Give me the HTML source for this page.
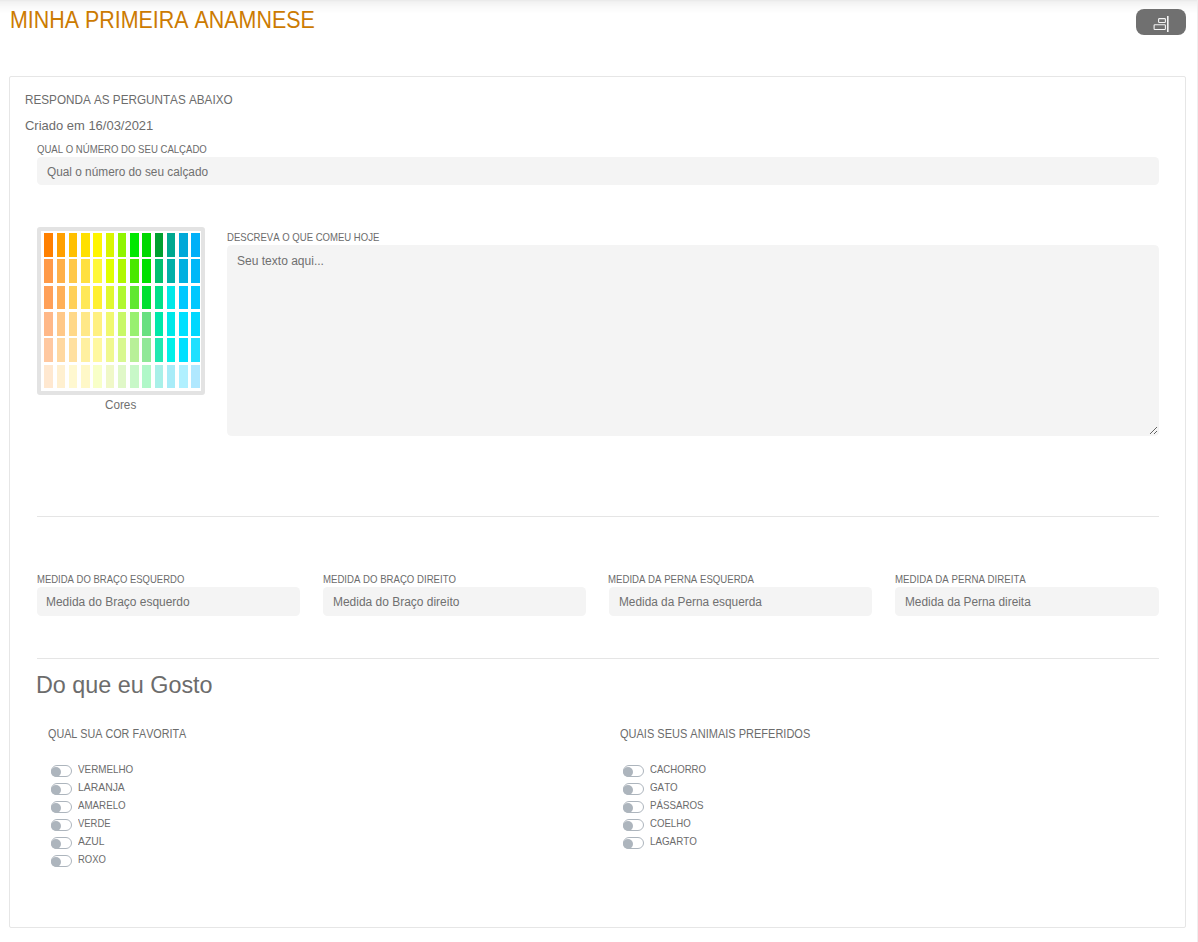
<!DOCTYPE html>
<html><head><meta charset="utf-8">
<style>
*{box-sizing:border-box;margin:0;padding:0}
html,body{width:1198px;height:942px;overflow:hidden;background:#fff}
body{font-family:"Liberation Sans",sans-serif;position:relative;color:#5a5a5a}
.sh{position:absolute;left:0;width:1198px;height:1px}
.redge{position:absolute;left:1197px;top:0;width:1px;height:942px;background:#efefef}
.t{position:absolute;white-space:nowrap;line-height:1;transform-origin:0 0;font-kerning:none}
.title{color:#cc7b02}
.btn{position:absolute;left:1136px;top:9px;width:50px;height:26px;background:#707070;border-radius:8px}
.card{position:absolute;left:9px;top:76px;width:1177px;height:852px;border:1px solid #e6e6e6;border-radius:2px}
.inp{position:absolute;background:#f4f4f4;border-radius:4.5px}
.ta{position:absolute;background:#f4f4f4;border-radius:4.5px;border:1px solid #f4f4f4;outline:0;resize:vertical;display:block}
.hr{position:absolute;height:1px;background:#e5e5e5}
.lbl{color:#6c6c6c}
.ph{color:#707070}
.pal{position:absolute;left:37px;top:227px;width:168px;height:168px;border:4px solid #e3e3e3;border-radius:3px;background:#fff}
.sw{position:absolute;width:8.5px;height:23.7px}
.tg{position:absolute;width:21px;height:12px;border:1px solid #adb5bd;border-radius:6px;background:#fff}
.tg::after{content:"";position:absolute;left:-1px;top:1px;width:10px;height:10px;border-radius:50%;background:#adb5bd}
.opt{color:#6c6c6c}
.q{color:#6c6c6c}
.hd{color:#6c6c6c}
.h3{color:#6c6c6c}
</style></head><body>
<div class="sh" style="top:0px;background:#ebebeb"></div><div class="sh" style="top:1px;background:#f0f0f0"></div><div class="sh" style="top:2px;background:#f3f3f3"></div><div class="sh" style="top:3px;background:#f4f4f4"></div><div class="sh" style="top:4px;background:#f6f6f6"></div><div class="sh" style="top:5px;background:#f7f7f7"></div><div class="sh" style="top:6px;background:#f9f9f9"></div><div class="sh" style="top:7px;background:#fafafa"></div><div class="sh" style="top:8px;background:#fbfbfb"></div><div class="sh" style="top:9px;background:#fcfcfc"></div><div class="sh" style="top:10px;background:#fcfcfc"></div><div class="sh" style="top:11px;background:#fdfdfd"></div><div class="sh" style="top:12px;background:#fefefe"></div><div class="redge"></div>
<div class="btn"><svg width="50" height="26" viewBox="0 0 50 26" style="position:absolute;left:0;top:0"><g fill="none" stroke="#f4f4f4"><line x1="31.8" y1="6.9" x2="31.8" y2="22.9" stroke-width="1.6"/><rect x="22.6" y="9.6" width="6.8" height="3.9" rx="0.8" stroke-width="1.1"/><rect x="18.1" y="15.8" width="11.3" height="4.7" rx="0.8" stroke-width="1.1"/></g></svg></div>
<div class="card"></div>
<div class="inp" style="left:37px;top:157px;width:1122px;height:28px"></div>
<div class="pal"></div>
<div style="position:absolute;left:0;top:0;width:1198px;height:942px"><div class="sw" style="left:44.40px;top:233.00px;background:#FF8000"></div><div class="sw" style="left:56.65px;top:233.00px;background:#FFA000"></div><div class="sw" style="left:68.90px;top:233.00px;background:#FFC000"></div><div class="sw" style="left:81.15px;top:233.00px;background:#FFE000"></div><div class="sw" style="left:93.40px;top:233.00px;background:#FFF500"></div><div class="sw" style="left:105.65px;top:233.00px;background:#D8F500"></div><div class="sw" style="left:117.90px;top:233.00px;background:#90F500"></div><div class="sw" style="left:130.15px;top:233.00px;background:#00E800"></div><div class="sw" style="left:142.40px;top:233.00px;background:#00D800"></div><div class="sw" style="left:154.65px;top:233.00px;background:#00A030"></div><div class="sw" style="left:166.90px;top:233.00px;background:#00A890"></div><div class="sw" style="left:179.15px;top:233.00px;background:#00A8D8"></div><div class="sw" style="left:191.40px;top:233.00px;background:#00B0F8"></div><div class="sw" style="left:44.40px;top:259.30px;background:#FF9A48"></div><div class="sw" style="left:56.65px;top:259.30px;background:#FFB048"></div><div class="sw" style="left:68.90px;top:259.30px;background:#FFC848"></div><div class="sw" style="left:81.15px;top:259.30px;background:#FFE040"></div><div class="sw" style="left:93.40px;top:259.30px;background:#FFF838"></div><div class="sw" style="left:105.65px;top:259.30px;background:#E0FF00"></div><div class="sw" style="left:117.90px;top:259.30px;background:#B0F800"></div><div class="sw" style="left:130.15px;top:259.30px;background:#48E800"></div><div class="sw" style="left:142.40px;top:259.30px;background:#00E000"></div><div class="sw" style="left:154.65px;top:259.30px;background:#00C070"></div><div class="sw" style="left:166.90px;top:259.30px;background:#00B0A8"></div><div class="sw" style="left:179.15px;top:259.30px;background:#00B0E0"></div><div class="sw" style="left:191.40px;top:259.30px;background:#00B8F8"></div><div class="sw" style="left:44.40px;top:285.60px;background:#FFA058"></div><div class="sw" style="left:56.65px;top:285.60px;background:#FFB058"></div><div class="sw" style="left:68.90px;top:285.60px;background:#FFD058"></div><div class="sw" style="left:81.15px;top:285.60px;background:#FFE858"></div><div class="sw" style="left:93.40px;top:285.60px;background:#FFF030"></div><div class="sw" style="left:105.65px;top:285.60px;background:#E0F830"></div><div class="sw" style="left:117.90px;top:285.60px;background:#B0F830"></div><div class="sw" style="left:130.15px;top:285.60px;background:#60E830"></div><div class="sw" style="left:142.40px;top:285.60px;background:#00E030"></div><div class="sw" style="left:154.65px;top:285.60px;background:#00E088"></div><div class="sw" style="left:166.90px;top:285.60px;background:#00E8E8"></div><div class="sw" style="left:179.15px;top:285.60px;background:#00C8FF"></div><div class="sw" style="left:191.40px;top:285.60px;background:#00C8FF"></div><div class="sw" style="left:44.40px;top:311.90px;background:#FFB888"></div><div class="sw" style="left:56.65px;top:311.90px;background:#FFC888"></div><div class="sw" style="left:68.90px;top:311.90px;background:#FFD888"></div><div class="sw" style="left:81.15px;top:311.90px;background:#FFE888"></div><div class="sw" style="left:93.40px;top:311.90px;background:#FFF080"></div><div class="sw" style="left:105.65px;top:311.90px;background:#F0F870"></div><div class="sw" style="left:117.90px;top:311.90px;background:#C8F868"></div><div class="sw" style="left:130.15px;top:311.90px;background:#98F070"></div><div class="sw" style="left:142.40px;top:311.90px;background:#68E080"></div><div class="sw" style="left:154.65px;top:311.90px;background:#00E8A8"></div><div class="sw" style="left:166.90px;top:311.90px;background:#00E8E8"></div><div class="sw" style="left:179.15px;top:311.90px;background:#00E0FF"></div><div class="sw" style="left:191.40px;top:311.90px;background:#00D8FF"></div><div class="sw" style="left:44.40px;top:338.20px;background:#FFC8A0"></div><div class="sw" style="left:56.65px;top:338.20px;background:#FFD8A0"></div><div class="sw" style="left:68.90px;top:338.20px;background:#FFE0A0"></div><div class="sw" style="left:81.15px;top:338.20px;background:#FFF0A0"></div><div class="sw" style="left:93.40px;top:338.20px;background:#FFF8A0"></div><div class="sw" style="left:105.65px;top:338.20px;background:#F0F890"></div><div class="sw" style="left:117.90px;top:338.20px;background:#D8F890"></div><div class="sw" style="left:130.15px;top:338.20px;background:#B8F098"></div><div class="sw" style="left:142.40px;top:338.20px;background:#90E898"></div><div class="sw" style="left:154.65px;top:338.20px;background:#20E8B0"></div><div class="sw" style="left:166.90px;top:338.20px;background:#00F0E8"></div><div class="sw" style="left:179.15px;top:338.20px;background:#00E0FF"></div><div class="sw" style="left:191.40px;top:338.20px;background:#20E0FF"></div><div class="sw" style="left:44.40px;top:364.50px;background:#FFE8D0"></div><div class="sw" style="left:56.65px;top:364.50px;background:#FFF0D0"></div><div class="sw" style="left:68.90px;top:364.50px;background:#FFF8D0"></div><div class="sw" style="left:81.15px;top:364.50px;background:#FFF8C8"></div><div class="sw" style="left:93.40px;top:364.50px;background:#F8FFC8"></div><div class="sw" style="left:105.65px;top:364.50px;background:#F0F8C8"></div><div class="sw" style="left:117.90px;top:364.50px;background:#E0F8C8"></div><div class="sw" style="left:130.15px;top:364.50px;background:#C8F8C8"></div><div class="sw" style="left:142.40px;top:364.50px;background:#B0F8C8"></div><div class="sw" style="left:154.65px;top:364.50px;background:#A8F0E8"></div><div class="sw" style="left:166.90px;top:364.50px;background:#A8ECF8"></div><div class="sw" style="left:179.15px;top:364.50px;background:#B0F0FF"></div><div class="sw" style="left:191.40px;top:364.50px;background:#B0E8FF"></div></div>
<textarea class="ta" style="left:227px;top:245px;width:932px;height:191px"></textarea>
<div class="hr" style="left:37px;top:516px;width:1122px"></div>
<div class="inp" style="left:37px;top:587px;width:263px;height:29px"></div>
<div class="inp" style="left:323px;top:587px;width:263px;height:29px"></div>
<div class="inp" style="left:609px;top:587px;width:263px;height:29px"></div>
<div class="inp" style="left:895px;top:587px;width:264px;height:29px"></div>
<div class="hr" style="left:37px;top:658px;width:1122px"></div>
<div class="tg" style="left:51px;top:765px"></div><div class="tg" style="left:51px;top:783px"></div><div class="tg" style="left:51px;top:801px"></div><div class="tg" style="left:51px;top:819px"></div><div class="tg" style="left:51px;top:837px"></div><div class="tg" style="left:51px;top:855px"></div><div class="tg" style="left:623px;top:765px"></div><div class="tg" style="left:623px;top:783px"></div><div class="tg" style="left:623px;top:801px"></div><div class="tg" style="left:623px;top:819px"></div><div class="tg" style="left:623px;top:837px"></div>
<div class="t title" id="t0" style="left:10.01px;top:8.94px;font-size:23.7px;transform:scaleX(0.9045);">MINHA PRIMEIRA ANAMNESE</div>
<div class="t hd" id="t1" style="left:25.19px;top:93.50px;font-size:12.4px;transform:scaleX(0.9452);">RESPONDA AS PERGUNTAS ABAIXO</div>
<div class="t hd" id="t2" style="left:25.08px;top:120.08px;font-size:12.9px;transform:scaleX(1.0057);">Criado em 16/03/2021</div>
<div class="t lbl" id="t3" style="left:36.63px;top:143.94px;font-size:10.7px;transform:scaleX(0.8963);">QUAL O NÚMERO DO SEU CALÇADO</div>
<div class="t ph" id="t4" style="left:46.51px;top:165.79px;font-size:12.3px;transform:scaleX(0.9616);">Qual o número do seu calçado</div>
<div class="t ph" id="t5" style="left:104.80px;top:398.50px;font-size:12.4px;transform:scaleX(0.9449);">Cores</div>
<div class="t lbl" id="t6" style="left:227.31px;top:231.94px;font-size:10.7px;transform:scaleX(0.8939);">DESCREVA O QUE COMEU HOJE</div>
<div class="t ph" id="t7" style="left:236.86px;top:255.19px;font-size:12.3px;transform:scaleX(0.9785);">Seu texto aqui...</div>
<div class="t lbl" id="t8" style="left:36.66px;top:573.94px;font-size:10.7px;transform:scaleX(0.8891);">MEDIDA DO BRAÇO ESQUERDO</div>
<div class="t lbl" id="t9" style="left:322.66px;top:573.94px;font-size:10.7px;transform:scaleX(0.8996);">MEDIDA DO BRAÇO DIREITO</div>
<div class="t lbl" id="t10" style="left:608.42px;top:573.94px;font-size:10.7px;transform:scaleX(0.9003);">MEDIDA DA PERNA ESQUERDA</div>
<div class="t lbl" id="t11" style="left:895.12px;top:573.94px;font-size:10.7px;transform:scaleX(0.9062);">MEDIDA DA PERNA DIREITA</div>
<div class="t ph" id="t12" style="left:46.09px;top:596.39px;font-size:12.3px;transform:scaleX(0.9727);">Medida do Braço esquerdo</div>
<div class="t ph" id="t13" style="left:332.78px;top:596.39px;font-size:12.3px;transform:scaleX(0.9729);">Medida do Braço direito</div>
<div class="t ph" id="t14" style="left:618.66px;top:596.39px;font-size:12.3px;transform:scaleX(0.9629);">Medida da Perna esquerda</div>
<div class="t ph" id="t15" style="left:905.27px;top:596.39px;font-size:12.3px;transform:scaleX(0.9631);">Medida da Perna direita</div>
<div class="t h3" id="t16" style="left:35.70px;top:673.53px;font-size:23.0px;transform:scaleX(1.0155);">Do que eu Gosto</div>
<div class="t q" id="t17" style="left:47.56px;top:729.43px;font-size:11.9px;transform:scaleX(0.9059);">QUAL SUA COR FAVORITA</div>
<div class="t q" id="t18" style="left:619.51px;top:729.43px;font-size:11.9px;transform:scaleX(0.9259);">QUAIS SEUS ANIMAIS PREFERIDOS</div>
<div class="t opt" id="t19" style="left:77.67px;top:763.91px;font-size:10.5px;transform:scaleX(0.9373);">VERMELHO</div>
<div class="t opt" id="t20" style="left:77.60px;top:781.91px;font-size:10.5px;transform:scaleX(0.9897);">LARANJA</div>
<div class="t opt" id="t21" style="left:77.75px;top:799.91px;font-size:10.5px;transform:scaleX(0.9283);">AMARELO</div>
<div class="t opt" id="t22" style="left:77.62px;top:817.91px;font-size:10.5px;transform:scaleX(0.8984);">VERDE</div>
<div class="t opt" id="t23" style="left:77.83px;top:835.91px;font-size:10.5px;transform:scaleX(0.9830);">AZUL</div>
<div class="t opt" id="t24" style="left:77.88px;top:853.91px;font-size:10.5px;transform:scaleX(0.9034);">ROXO</div>
<div class="t opt" id="t25" style="left:649.57px;top:763.91px;font-size:10.5px;transform:scaleX(0.9138);">CACHORRO</div>
<div class="t opt" id="t26" style="left:649.57px;top:781.91px;font-size:10.5px;transform:scaleX(0.9313);">GATO</div>
<div class="t opt" id="t27" style="left:649.74px;top:799.91px;font-size:10.5px;transform:scaleX(0.9282);">PÁSSAROS</div>
<div class="t opt" id="t28" style="left:649.57px;top:817.91px;font-size:10.5px;transform:scaleX(0.9161);">COELHO</div>
<div class="t opt" id="t29" style="left:649.74px;top:835.91px;font-size:10.5px;transform:scaleX(0.9327);">LAGARTO</div>
</body></html>
